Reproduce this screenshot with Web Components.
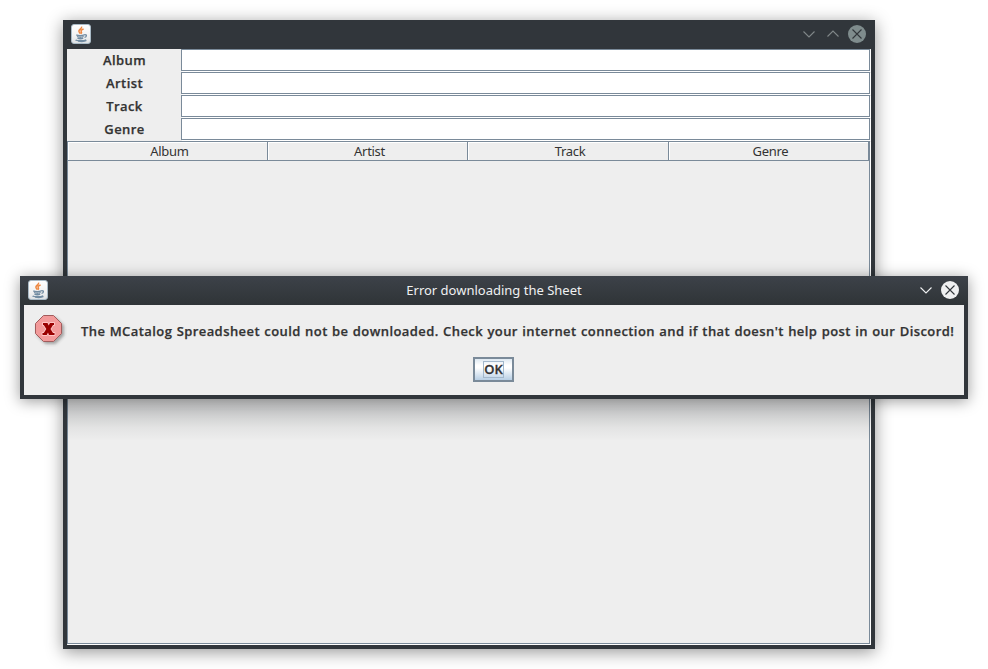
<!DOCTYPE html>
<html lang="en">
<head>
<meta charset="utf-8">
<title>MCatalog</title>
<style>
html,body{margin:0;width:988px;height:669px;overflow:hidden;background:#fff}
body{font-family:"Noto Sans","Open Sans",sans-serif;color:#333}
</style>
</head>
<body>
<desk-top></desk-top>

<template id="java-icon-t">
<style>:host{display:block;width:20px;height:20px}svg{display:block}</style>
<svg width="20" height="20" viewBox="0 0 20 20" fill="none">
<defs><linearGradient id="g" x2="0" y2="1"><stop stop-color="#fff"/><stop offset=".6" stop-color="#f2f2f2"/><stop offset="1" stop-color="#dde1e4"/></linearGradient></defs>
<rect x=".5" y=".5" width="19" height="19" rx="2.5" fill="url(#g)" stroke="#a9bac6"/>
<path d="M10.500 2.600c1 2-3.200 2.900-2.600 4.800.2.800.8 1.400 1.600 2.200M12.600 5c-2.300.8-3.100 1.700-2.300 2.700.5.700.2 1.400-.4 2" stroke="#ee8740" stroke-width="1.500"/>
<path d="M5.300 10.900c1.500.9 6 .9 8 0M6 12.500c1.600.7 5.100.7 6.700 0M6.500 14.100c1.500.7 4.300.7 5.700 0M13.300 10.700c3-.3 2.500 2.200.2 2.700M4.600 15.900c1 1.200 8.500 1.200 10.600-.1M7 17.200c3 .5 7 .2 8.500-.7" stroke="#728ca2" stroke-width="1.350"/>
</svg>
</template>

<template id="win-button-t">
<style>
:host{display:block;width:18px;height:18px;color:#818789}
:host([active]){color:#eff0f1}
svg{display:none}
:host([kind=down]) .down,:host([kind=up]) .up,:host([kind=close]) .close{display:block}
circle{fill:#7f8c8d}
:host([active]) circle{fill:#eff0f1}
</style>
<svg class="down" width="18" height="18" fill="none" stroke="currentColor" stroke-width="1.100"><path d="M3.500 6.500l5.500 5.500 5.500-5.500"/></svg>
<svg class="up" width="18" height="18" fill="none" stroke="currentColor" stroke-width="1.100"><path d="M3.500 11.500l5.500-5.500 5.500 5.500"/></svg>
<svg class="close" width="18" height="18"><circle cx="9" cy="9" r="9"/><path d="M4.500 4.500l9 9m0-9l-9 9" stroke="#31363b" stroke-width="1.100"/></svg>
</template>

<template id="app-window-t">
<style>
:host{display:flex;flex-direction:column;box-sizing:border-box;background:#31363b;padding:0 4px 4px}
header{height:29px;display:grid;grid-template-columns:68px 1fr 68px;align-items:center;margin:0 -4px;padding:0 9px 0 8px;flex:none;box-sizing:border-box}
:host([active]) header{background:linear-gradient(#3d4249,#2f3437)}
java-icon{margin-top:-1px}
.t{text-align:center;font-size:13px;line-height:18px;color:#eff0f1;white-space:nowrap;margin-top:-2px;padding-left:1px}
.b{display:flex;gap:6px;justify-content:flex-end;margin-top:-1px}
main{flex:1;background:#eee;min-height:0}
</style>
<header><java-icon></java-icon><div class="t"></div><div class="b"><slot name="buttons"></slot></div></header>
<main><slot></slot></main>
</template>

<template id="filter-row-t">
<style>
:host{display:grid;grid-template-columns:114px 1fr;height:23px}
b{font:600 13px/23px "Open Sans","Noto Sans",sans-serif;text-align:center;letter-spacing:.4px;padding-left:1px;color:#333;-webkit-text-stroke:.25px #333}
i{display:block;box-sizing:border-box;height:22px;margin-right:1px;border:1px solid #7a8a99;background:#fff;box-shadow:1px 1px #fff}
</style>
<b><slot></slot></b><i></i>
</template>

<template id="data-table-t">
<style>
:host{display:block;box-sizing:border-box;width:803px;height:503px;border:1px solid #7a8a99;box-shadow:1px 1px #fff}
.h{display:grid;grid-template-columns:200px 200px 201px 200px;height:19px}
.h span{box-sizing:border-box;height:19px;border-right:1px solid #7a8a99;border-bottom:1px solid #7a8a99;box-shadow:inset 1px 1px #fff;text-align:center;font-size:13px;line-height:18px;letter-spacing:-.3px;padding-left:4px}
</style>
<div class="h"><span>Album</span><span>Artist</span><span>Track</span><span>Genre</span></div>
</template>

<template id="error-message-t">
<style>
:host{display:grid;grid-template-columns:47px minmax(0,1fr);padding:10px 0 0 10px}
svg{display:block}
p{margin:7px 0 0;font:600 13px/18px "Open Sans","Noto Sans",sans-serif;white-space:nowrap;letter-spacing:.42px;word-spacing:.56px;color:#333;-webkit-text-stroke:.25px #333}
.ok{grid-column:1/3;display:flex;justify-content:center;padding-right:11px;margin-top:8px}
button{font:600 13px/16px "Open Sans","Noto Sans",sans-serif;box-sizing:border-box;width:41px;height:25px;margin:0;padding:2px 0;border:2px solid #7a8a99;background:linear-gradient(#dfe9f2,#fff 30%,#fff 42%,#b8cfe5);color:#333;display:flex;justify-content:center}
button span{box-sizing:border-box;width:21px;height:17px;border:1px solid #a3b8cc;line-height:15px;display:flex;justify-content:center;-webkit-text-stroke:.3px #333}
</style>
<svg width="34" height="34"><defs><filter id="s" x="-30%" y="-30%" width="170%" height="170%"><feDropShadow dx="2" dy="2" stdDeviation="1.500" flood-color="#555" flood-opacity=".5"/></filter></defs>
<path filter="url(#s)" d="M9.500.5h10l8 8v10l-8 8h-10l-8-8v-10z" fill="#f29a9a" stroke="#a25b5b"/>
<path d="M9 8h4.500l1.200 2.500L16 8h4v2h-1l-2.500 4 2.500 4h1.500v2H15l-1-2.500-1.300 2.500H8.500v-2h1.300l2.500-4-2.500-4H9z" fill="#900" stroke="#ffc4c4" stroke-width="1.800" stroke-linejoin="round" paint-order="stroke"/></svg>
<p><slot></slot></p>
<div class="ok"><button><span>OK</span></button></div>
</template>

<template id="desk-top-t">
<style>
:host{display:block;position:relative;width:988px;height:669px;overflow:hidden}
app-window{position:absolute}
.main{left:63px;top:20px;width:812px;height:629px;box-shadow:0 3px 16px rgba(0,0,0,.42)}
.dlg{left:20px;top:276px;width:948px;height:123px;box-shadow:0 2px 14px rgba(0,0,0,.4)}
.shade{position:absolute;left:67px;top:399px;width:804px;height:42px;background:linear-gradient(rgba(20,25,30,.14),rgba(20,25,30,.17) 25%,rgba(20,25,30,.12) 45%,rgba(20,25,30,.05) 68%,transparent)}
</style>
<app-window class="main">
<win-button slot="buttons" kind="down"></win-button><win-button slot="buttons" kind="up"></win-button><win-button slot="buttons" kind="close"></win-button>
<filter-row>Album</filter-row><filter-row>Artist</filter-row><filter-row>Track</filter-row><filter-row>Genre</filter-row>
<data-table></data-table>
</app-window>
<div class="shade"></div>
<app-window class="dlg" active caption="Error downloading the Sheet">
<win-button active slot="buttons" kind="down"></win-button><win-button active slot="buttons" kind="close"></win-button>
<error-message>The MCatalog Spreadsheet could not be downloaded. Check your internet connection and if that doesn't help post in our Discord!</error-message>
</app-window>
</template>

<script>
for (const name of ['java-icon','win-button','app-window','filter-row','data-table','error-message','desk-top']) {
  customElements.define(name, class extends HTMLElement {
    constructor() {
      super();
      this.attachShadow({mode:'open'}).append(document.getElementById(name + '-t').content.cloneNode(true));
    }
    connectedCallback() {
      const t = this.shadowRoot.querySelector('.t');
      if (t) t.textContent = this.getAttribute('caption') || '';
    }
  });
}
</script>
</body>
</html>
